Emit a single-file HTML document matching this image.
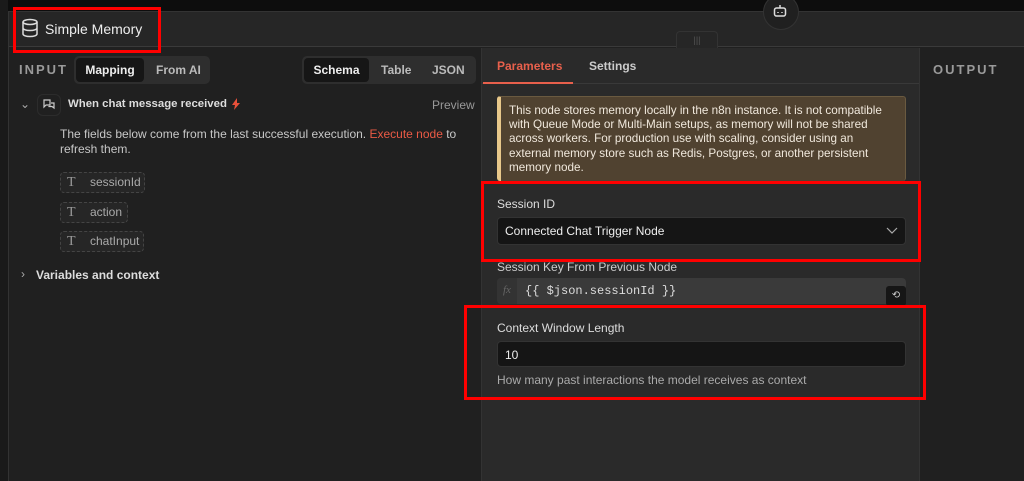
<!DOCTYPE html>
<html><head><style>
*{margin:0;padding:0;box-sizing:border-box}
body{width:1024px;height:481px;background:#0d0d0d;font-family:"Liberation Sans",sans-serif;overflow:hidden;position:relative;color:#e0e0e0}
.a{position:absolute}
.t{font-size:12px;white-space:nowrap}
.red{position:absolute;border:3px solid #f00}
</style></head><body>
<div class="a" style="left:0;top:0;width:8px;height:481px;background:#1a1a1a"></div>
<div class="a" style="left:8px;top:11px;width:1016px;height:470px;background:#202020;border-top:1px solid #333;border-left:1px solid #333"></div>
<div class="a" style="left:9px;top:12px;width:1015px;height:35px;background:#262626;border-bottom:1px solid #3a3a3a"></div>
<svg class="a" style="left:21px;top:18px" width="18" height="20" viewBox="0 0 18 20" fill="none" stroke="#ddd" stroke-width="1.5"><ellipse cx="9" cy="4" rx="7" ry="2.5"/><path d="M2 4v12c0 1.4 3 2.5 7 2.5s7-1.1 7-2.5V4M2 10c0 1.4 3 2.5 7 2.5s7-1.1 7-2.5"/></svg>
<div class="a" style="left:45px;top:21px;font-size:14px;color:#eee">Simple Memory</div>
<div class="red" style="left:13px;top:7px;width:148px;height:46px"></div>
<div class="a" style="left:763px;top:-6px;width:36px;height:36px;border-radius:50%;background:#202020;border:1px solid #333"></div>
<svg class="a" style="left:772px;top:3px" width="16" height="16" viewBox="0 0 16 16" fill="none" stroke="#ddd" stroke-width="1.5"><rect x="2.5" y="5" width="11" height="8" rx="2"/><path d="M8 5V2M6 9v1M10 9v1"/></svg>
<div class="a" style="left:676px;top:31px;width:42px;height:17px;background:#262626;border:1px solid #333;border-bottom:none;border-radius:4px 4px 0 0;color:#555;font-size:9px;text-align:center;line-height:16px">|||</div>
<!-- left -->
<div class="a t" style="left:19px;top:62px;font-size:13px;letter-spacing:2px;color:#9a9a9a;font-weight:bold">INPUT</div>
<div class="a" style="left:74px;top:56px;width:136px;height:28px;background:#2e2e2e;border-radius:5px"></div>
<div class="a t" style="left:76px;top:58px;width:68px;height:24px;background:#161616;border-radius:4px;text-align:center;line-height:24px;font-weight:bold;color:#eee">Mapping</div>
<div class="a t" style="left:156px;top:63px;font-weight:bold;color:#bbb">From AI</div>
<div class="a" style="left:302px;top:56px;width:174px;height:28px;background:#2e2e2e;border-radius:5px"></div>
<div class="a t" style="left:304px;top:58px;width:65px;height:24px;background:#161616;border-radius:4px;text-align:center;line-height:24px;font-weight:bold;color:#eee">Schema</div>
<div class="a t" style="left:381px;top:63px;font-weight:bold;color:#bbb">Table</div>
<div class="a t" style="left:432px;top:63px;font-weight:bold;color:#bbb">JSON</div>
<div class="a t" style="left:20px;top:97px;color:#aaa">⌄</div>
<div class="a" style="left:37px;top:94px;width:24px;height:22px;border-radius:6px;border:1px solid #2c2c2c"></div>
<svg class="a" style="left:42px;top:98px" width="14" height="14" viewBox="0 0 14 14" fill="none" stroke="#ccc" stroke-width="1.2"><path d="M2 2h6v5H4L2 9zM9 5h3v5l-2-1.5H7V8"/></svg>
<div class="a t" style="left:68px;top:98px;font-weight:bold;color:#ddd;font-size:11.4px">When chat message received</div>
<svg class="a" style="left:232px;top:98px" width="8" height="12" viewBox="0 0 8 12"><path d="M5 0L0 7h3l-1 5 6-7H5z" fill="#e8503a"/></svg>
<div class="a t" style="left:432px;top:98px;color:#999">Preview</div>
<div class="a" style="left:60px;top:127px;font-size:12px;line-height:15px;color:#c8c8c8;width:410px">The fields below come from the last successful execution. <span style="color:#ea5a45">Execute node</span> to refresh them.</div>
<div class="a t" style="left:60px;top:172px;width:85px;height:21px;border:1px dashed #444;border-radius:4px;background:#262626;color:#aaa;line-height:19px;padding-left:29px">sessionId</div>
<div class="a t" style="left:60px;top:202px;width:68px;height:21px;border:1px dashed #444;border-radius:4px;background:#262626;color:#aaa;line-height:19px;padding-left:29px">action</div>
<div class="a t" style="left:60px;top:231px;width:84px;height:21px;border:1px dashed #444;border-radius:4px;background:#262626;color:#aaa;line-height:19px;padding-left:29px">chatInput</div>
<div class="a" style="left:67px;top:175px;font-family:'Liberation Serif',serif;font-size:14px;color:#999">T</div>
<div class="a" style="left:67px;top:205px;font-family:'Liberation Serif',serif;font-size:14px;color:#999">T</div>
<div class="a" style="left:67px;top:234px;font-family:'Liberation Serif',serif;font-size:14px;color:#999">T</div>
<div class="a t" style="left:21px;top:267px;color:#aaa">›</div>
<div class="a t" style="left:36px;top:268px;font-weight:bold;color:#ddd">Variables and context</div>
<!-- middle -->
<div class="a" style="left:481px;top:48px;width:439px;height:433px;background:#2a2a2a;border-left:1px solid #333;border-right:1px solid #333"></div>
<div class="a" style="left:482px;top:83px;width:437px;height:1px;background:#393939"></div>
<div class="a t" style="left:497px;top:59px;font-weight:bold;color:#e8604c">Parameters</div>
<div class="a" style="left:483px;top:82px;width:90px;height:2px;background:#e8604c"></div>
<div class="a t" style="left:589px;top:59px;font-weight:bold;color:#ccc">Settings</div>
<div class="a" style="left:497px;top:96px;width:409px;height:85px;background:#504230;border-left:4px solid #e8c88a;border-radius:3px;border-top:1px solid #6a5a40;border-right:1px solid #6a5a40"></div>
<div class="a" style="left:509px;top:104px;width:385px;font-size:11.7px;line-height:14.2px;color:#f0e8dc">This node stores memory locally in the n8n instance. It is not compatible with Queue Mode or Multi-Main setups, as memory will not be shared across workers. For production use with scaling, consider using an external memory store such as Redis, Postgres, or another persistent memory node.</div>
<div class="a t" style="left:497px;top:197px;color:#ddd">Session ID</div>
<div class="a" style="left:497px;top:217px;width:409px;height:28px;background:#151515;border:1px solid #333;border-radius:4px"></div>
<div class="a t" style="left:505px;top:224px;color:#eee">Connected Chat Trigger Node</div>
<svg class="a" style="left:886px;top:225px" width="12" height="10" viewBox="0 0 12 10" fill="none" stroke="#aaa" stroke-width="1.2"><path d="M1 3l5 5 5-5"/></svg>
<div class="a t" style="left:497px;top:260px;color:#ccc">Session Key From Previous Node</div>
<div class="a" style="left:497px;top:278px;width:409px;height:26px;background:#3a3a3a;border-radius:4px"></div>
<div class="a" style="left:497px;top:278px;width:20px;height:26px;background:#333;border-radius:4px 0 0 4px"></div>
<div class="a" style="left:503px;top:284px;font-family:'Liberation Serif',serif;font-style:italic;font-size:11px;color:#666">fx</div>
<div class="a" style="left:525px;top:284px;font-family:'Liberation Mono',monospace;font-size:12px;color:#ddd">{{ $json.sessionId }}</div>
<div class="a" style="left:886px;top:286px;width:20px;height:20px;background:#161616;border-radius:3px;color:#ccc;font-size:10px;text-align:center;line-height:20px">⟲</div>
<div class="a t" style="left:497px;top:321px;color:#ddd">Context Window Length</div>
<div class="a" style="left:497px;top:341px;width:409px;height:26px;background:#151515;border:1px solid #333;border-radius:4px"></div>
<div class="a t" style="left:505px;top:348px;color:#eee">10</div>
<div class="a t" style="left:497px;top:373px;color:#aaa">How many past interactions the model receives as context</div>
<div class="red" style="left:481px;top:181px;width:440px;height:81px"></div>
<div class="red" style="left:464px;top:305px;width:462px;height:95px"></div>
<div class="a t" style="left:933px;top:62px;font-size:13px;letter-spacing:2px;color:#9a9a9a;font-weight:bold">OUTPUT</div>
</body></html>
